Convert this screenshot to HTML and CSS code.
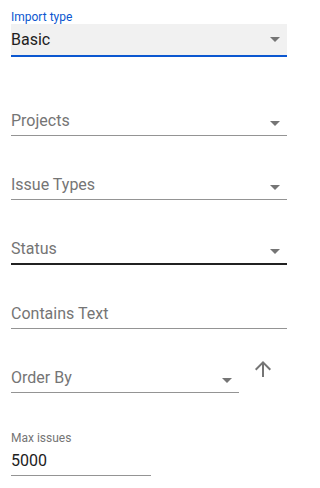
FILE: index.html
```html
<!DOCTYPE html>
<html>
<head>
<meta charset="utf-8">
<link rel="stylesheet" href="styles.css">
</head>
<body>
<div class="form">
  <div class="fill-field">
    <div class="fill-label">Import type</div>
    <div class="fill-box">
      <span class="value">Basic</span>
      <span class="arrow"></span>
    </div>
  </div>

  <div class="field first">
    <span class="placeholder">Projects</span>
    <span class="arrow"></span>
  </div>

  <div class="field">
    <span class="placeholder">Issue Types</span>
    <span class="arrow"></span>
  </div>

  <div class="field hover">
    <span class="placeholder">Status</span>
    <span class="arrow"></span>
  </div>

  <div class="field text-field">
    <span class="placeholder">Contains Text</span>
  </div>

  <div class="order-row">
    <div class="field order">
      <span class="placeholder">Order By</span>
      <span class="arrow"></span>
    </div>
    <div class="icon-btn">
      <svg width="24" height="24" viewBox="0 0 24 24"><path d="M4 12l1.41 1.41L11 7.83V20h2V7.83l5.58 5.59L20 12l-8-8-8 8z" fill="#757575"/></svg>
    </div>
  </div>

  <div class="max-field">
    <div class="max-label">Max issues</div>
    <div class="max-input"><span class="value">5000</span></div>
  </div>
</div>
</body>
</html>
```

FILE: styles.css
```css
html, body {
  margin: 0;
  padding: 0;
  background: #ffffff;
}

body {
  font-family: Roboto, "Liberation Sans", sans-serif;
  width: 296px;
  height: 488px;
  overflow: hidden;
}

.form {
  padding: 0 9px 0 11px;
  display: flex;
  flex-direction: column;
}

.fill-label {
  margin-top: 10px;
  font-size: 12px;
  line-height: 14px;
  color: #0b57d0;
}

.fill-box {
  height: 31px;
  background: #f1f1f1;
  border-bottom: 2px solid #0b57d0;
  display: flex;
  align-items: center;
  justify-content: space-between;
  padding-right: 7px;
}

.value {
  font-size: 16px;
  line-height: 24px;
  color: #212121;
}

.arrow {
  width: 0;
  height: 0;
  border-left: 5px solid transparent;
  border-right: 5px solid transparent;
  border-top: 5px solid #757575;
}

.field {
  height: 63px;
  display: flex;
  align-items: flex-end;
  justify-content: space-between;
  padding-right: 7px;
  border-bottom: 1px solid #949494;
  box-sizing: content-box;
  height: 61px;
  padding-bottom: 2px;
}

.field.first {
  margin-top: 15px;
}

.field .arrow {
  margin-bottom: 7px;
}

.placeholder {
  font-size: 16px;
  line-height: 24px;
  color: #757575;
}

.field.hover {
  border-bottom-color: #212121;
  box-shadow: 0 1px 0 #212121;
}

.field.text-field {
  margin-top: 1px;
}

.order-row {
  display: flex;
  align-items: flex-start;
}

.field.order {
  flex: 1;
}

.icon-btn {
  width: 48px;
  height: 48px;
  margin-top: 16px;
  display: flex;
  align-items: center;
  justify-content: center;
}

.max-field {
  margin-top: 38px;
  width: 140px;
}

.max-label {
  font-size: 12px;
  line-height: 14px;
  color: #757575;
}

.max-input {
  margin-top: 4px;
  padding-bottom: 2px;
  border-bottom: 1px solid #949494;
}
```
